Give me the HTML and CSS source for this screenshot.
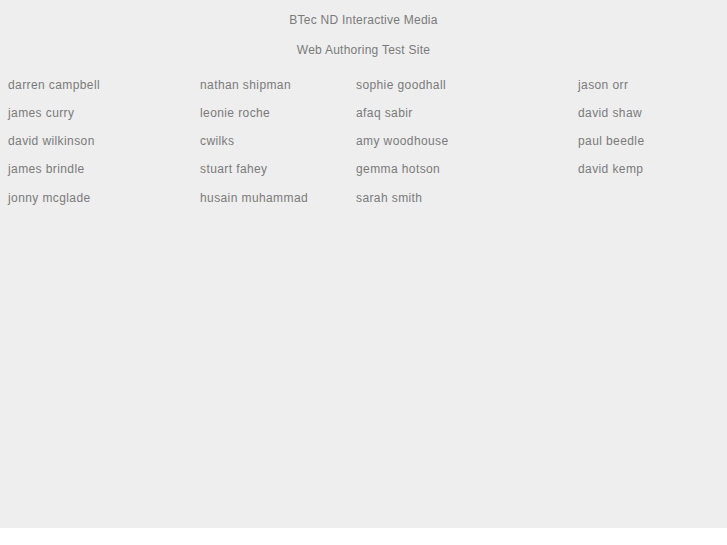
FILE: index.html
```html
<!DOCTYPE html>
<html>
<head>
<meta charset="utf-8">
<title>BTec ND Interactive Media</title>
<link rel="stylesheet" href="styles.css">
</head>
<body>
<div class="page">
  <header class="masthead">
    <p class="title">BTec ND Interactive Media</p>
    <p class="subtitle">Web Authoring Test Site</p>
  </header>
  <ul class="students">
    <li>darren campbell</li>
    <li>nathan shipman</li>
    <li>sophie goodhall</li>
    <li>jason orr</li>
    <li>james curry</li>
    <li>leonie roche</li>
    <li>afaq sabir</li>
    <li>david shaw</li>
    <li>david wilkinson</li>
    <li>cwilks</li>
    <li>amy woodhouse</li>
    <li>paul beedle</li>
    <li>james brindle</li>
    <li>stuart fahey</li>
    <li>gemma hotson</li>
    <li>david kemp</li>
    <li>jonny mcglade</li>
    <li>husain muhammad</li>
    <li>sarah smith</li>
  </ul>
</div>
</body>
</html>
```
FILE: styles.css
```css
html, body {
  margin: 0;
  padding: 0;
  background: #ffffff;
}
.page {
  background: #eeeeee;
  height: 528px;
  font-family: "Liberation Sans", Arial, sans-serif;
  font-size: 12px;
  color: #7a7a7a;
}
.masthead {
  padding-top: 12px;
  text-align: center;
}
.title, .subtitle {
  margin: 0;
  line-height: 16px;
  letter-spacing: 0.25px;
}
.title {
  height: 30px;
}
.subtitle {
  height: 29px;
}
.students {
  list-style: none;
  margin: 0;
  padding: 6px 0 0 8px;
  display: grid;
  grid-template-columns: 192px 156px 222px auto;
  grid-template-rows: 28px 28px 28px 29px 28px;
}
.students li {
  line-height: 16px;
  letter-spacing: 0.4px;
}
```
